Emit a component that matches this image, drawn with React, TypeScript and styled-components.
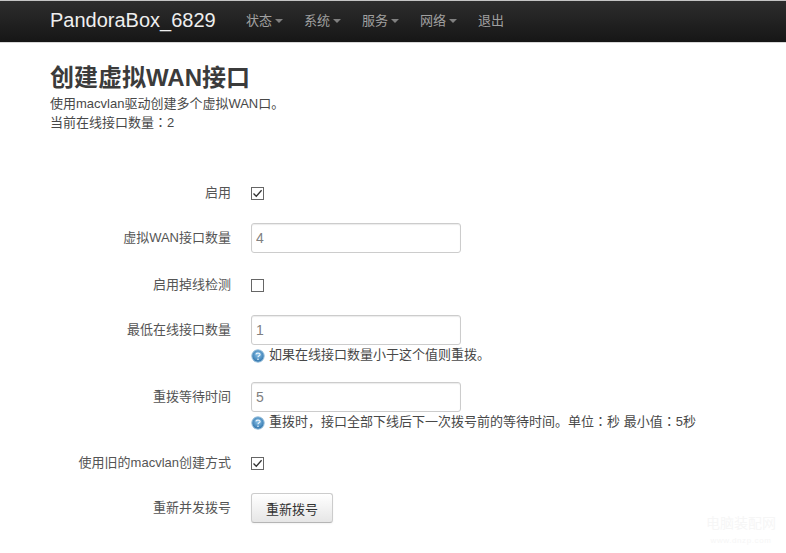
import React from "react";
import styled, { createGlobalStyle } from "styled-components";

const Global = createGlobalStyle`
  html, body { margin: 0; padding: 0; background: #fff; }
  body {
    font-family: "Liberation Sans", "Noto Sans CJK SC", sans-serif;
    font-size: 13px;
    color: #555;
    overflow: hidden;
  }
`;

const Page = styled.div`
  position: relative;
  width: 786px;
  height: 553px;
  overflow: hidden;
`;

const NavBar = styled.header`
  display: flex;
  align-items: center;
  height: 39px;
  padding: 0 0 2px 50px;
  background: linear-gradient(#2d2d2d, #161616);
  border-top: 1px solid #c4c4c4;
  border-bottom: 1px solid #d8d8d8;
`;

const Brand = styled.a`
  width: 196px;
  font-size: 20px;
  line-height: 39px;
  color: #eee;
`;

const NavItem = styled.a`
  display: flex;
  align-items: center;
  margin-right: 21px;
  font-size: 13px;
  color: #a0a0a0;
  line-height: 39px;
`;

const Caret = styled.span`
  width: 0;
  height: 0;
  margin-left: 3px;
  margin-top: 1px;
  border-left: 4px solid transparent;
  border-right: 4px solid transparent;
  border-top: 4px solid #808080;
`;

const Main = styled.main`
  padding: 20px 0 0 50px;
`;

const Title = styled.h1`
  margin: 0 0 1px;
  font-size: 24px;
  line-height: 30px;
  font-weight: 700;
  color: #3b3b3b;
`;

const Intro = styled.p`
  margin: 0;
  font-size: 13px;
  line-height: 19px;
  color: #484848;
`;

const Form = styled.form`
  display: flex;
  flex-direction: column;
  gap: 15px;
  margin-top: 46px;
`;

const Row = styled.div<{ $tail?: number }>`
  display: grid;
  grid-template-columns: 181px 210px;
  column-gap: 20px;
  align-items: start;
  padding-bottom: ${(p) => p.$tail ?? 0}px;
`;

const Label = styled.label`
  text-align: right;
  font-size: 13px;
  line-height: 30px;
  color: #555;
`;

const Control = styled.div`
  display: flex;
  align-items: center;
  height: 30px;
`;

const Stack = styled.div`
  display: flex;
  flex-direction: column;
`;

const Box = styled.span`
  display: flex;
  align-items: center;
  justify-content: center;
  box-sizing: border-box;
  width: 13px;
  height: 13px;
  border: 1px solid #666;
  background: #fff;
`;

const TextField = styled.input`
  box-sizing: border-box;
  display: block;
  width: 210px;
  height: 30px;
  padding: 4px 4px;
  border: 1px solid #ccc;
  border-radius: 3px;
  box-shadow: inset 0 1px 1px rgba(0, 0, 0, 0.08);
  font-family: inherit;
  font-size: 14px;
  color: #808080;
  outline: none;
`;

const Help = styled.div`
  display: flex;
  align-items: flex-start;
  gap: 4px;
  height: 20px;
  white-space: nowrap;
  font-size: 13px;
  line-height: 19px;
  color: #484848;
`;

const HelpGlyph = styled.svg`
  flex: none;
  width: 14px;
  height: 14px;
  margin-top: 4px;
`;

const Punct = styled.span`
  font-family: "Noto Sans CJK JP", sans-serif;
  line-height: 1;
`;

const Button = styled.button`
  box-sizing: border-box;
  width: 82px;
  height: 30px;
  border: 1px solid #ccc;
  border-bottom-color: #b5b5b5;
  border-radius: 3px;
  background: linear-gradient(#fff, #e6e6e6);
  box-shadow: 0 1px 2px rgba(0, 0, 0, 0.05);
  font-family: inherit;
  font-size: 13px;
  color: #333;
`;

const Watermark = styled.div`
  position: absolute;
  left: 706px;
  top: 516px;
  width: 70px;
  text-align: center;
  color: #f6f6f6;
  font-size: 14px;
  line-height: 15px;
`;

const WatermarkUrl = styled.div`
  margin-top: 5px;
  font-size: 8px;
  line-height: 9px;
  letter-spacing: 0.6px;
`;

const Check = ({ on }: { on?: boolean }) => (
  <Box>
    {on && (
      <svg width="11" height="11" viewBox="0 0 11 11" fill="none">
        <path d="M1.5 5.5 L4.3 8.3 L9.6 2.2" stroke="#333" strokeWidth="1.3" />
      </svg>
    )}
  </Box>
);

const HelpIcon = () => (
  <HelpGlyph viewBox="0 0 14 14">
    <defs>
      <radialGradient id="helpFill" cx="50%" cy="40%" r="60%">
        <stop offset="0%" stopColor="#8cc4ea" />
        <stop offset="100%" stopColor="#2a6fa8" />
      </radialGradient>
    </defs>
    <circle cx="7" cy="7" r="6.2" fill="url(#helpFill)" stroke="#9cc3de" strokeWidth="1" />
    <path
      d="M5 5.4 C5 3.6 9.1 3.6 9.1 5.5 C9.1 6.9 7 6.8 7 8.3"
      fill="none"
      stroke="#eaf4fb"
      strokeWidth="1.2"
    />
    <circle cx="7" cy="10.2" r="0.8" fill="#eaf4fb" />
  </HelpGlyph>
);

const navItems: { text: string; caret: boolean }[] = [
  { text: "状态", caret: true },
  { text: "系统", caret: true },
  { text: "服务", caret: true },
  { text: "网络", caret: true },
  { text: "退出", caret: false },
];

export default function App() {
  return (
    <Page>
      <Global />
      <NavBar>
        <Brand>PandoraBox_6829</Brand>
        {navItems.map((n) => (
          <NavItem key={n.text}>
            {n.text}
            {n.caret && <Caret />}
          </NavItem>
        ))}
      </NavBar>
      <Main>
        <Title>创建虚拟WAN接口</Title>
        <Intro>使用macvlan驱动创建多个虚拟WAN口。</Intro>
        <Intro>当前在线接口数量<Punct>：</Punct>2</Intro>
        <Form>
          <Row>
            <Label>启用</Label>
            <Control><Check on /></Control>
          </Row>
          <Row $tail={2}>
            <Label>虚拟WAN接口数量</Label>
            <TextField readOnly value="4" />
          </Row>
          <Row>
            <Label>启用掉线检测</Label>
            <Control><Check /></Control>
          </Row>
          <Row $tail={2}>
            <Label>最低在线接口数量</Label>
            <Stack>
              <TextField readOnly value="1" />
              <Help><HelpIcon /><span>如果在线接口数量小于这个值则重拨。</span></Help>
            </Stack>
          </Row>
          <Row $tail={1}>
            <Label>重拨等待时间</Label>
            <Stack>
              <TextField readOnly value="5" />
              <Help><HelpIcon /><span>重拨时，接口全部下线后下一次拨号前的等待时间。单位<Punct>：</Punct>秒 最小值<Punct>：</Punct>5秒</span></Help>
            </Stack>
          </Row>
          <Row>
            <Label>使用旧的macvlan创建方式</Label>
            <Control><Check on /></Control>
          </Row>
          <Row>
            <Label>重新并发拨号</Label>
            <Button type="button">重新拨号</Button>
          </Row>
        </Form>
      </Main>
      <Watermark>
        电脑装配网
        <WatermarkUrl>www.dnzp.com</WatermarkUrl>
      </Watermark>
    </Page>
  );
}
